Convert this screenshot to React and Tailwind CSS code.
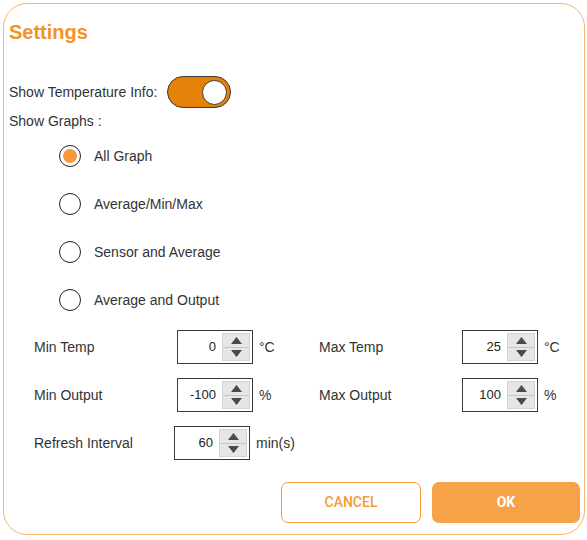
import React, { useState } from 'react';

const NumberBox = ({ value }) => (
  <div className="flex h-[34px] w-[76px] items-stretch border border-[#3a3a3a] bg-white">
    <div className="flex flex-1 items-center justify-end pr-[6px] text-[13px] text-[#222]">{value}</div>
    <div className="my-[2px] mr-[2px] flex w-[28px] flex-col border border-[#d4d4d4] bg-[#e6e6e6]">
      <div className="flex flex-1 items-center justify-center border-b border-[#c4c4c4]">
        <svg width="11" height="7" viewBox="0 0 11 7"><path d="M5.5 0L11 7H0z" fill="#4a4a4a" /></svg>
      </div>
      <div className="flex flex-1 items-center justify-center">
        <svg width="11" height="7" viewBox="0 0 11 7"><path d="M0 0h11L5.5 7z" fill="#4a4a4a" /></svg>
      </div>
    </div>
  </div>
);

const Field = ({ label, value, unit, labelW = 'w-[143px]' }) => (
  <div className="flex items-center">
    <span className={`${labelW} text-[14px] text-[#333]`}>{label}</span>
    <NumberBox value={value} />
    <span className="ml-[6px] text-[14px] text-[#333]">{unit}</span>
  </div>
);

const Radio = ({ label, checked, onClick }) => (
  <button onClick={onClick} className="flex h-[48px] items-center gap-[13px] text-left">
    <span className="flex h-[22px] w-[22px] items-center justify-center rounded-full border-[1.5px] border-[#222] bg-white">
      {checked && <span className="h-[14px] w-[14px] rounded-full bg-[#f49a3c]" />}
    </span>
    <span className="text-[14px] text-[#333]">{label}</span>
  </button>
);

export default function App() {
  const [showTemp, setShowTemp] = useState(true);
  const [graph, setGraph] = useState('all');
  const graphs = [
    { id: 'all', label: 'All Graph' },
    { id: 'avg', label: 'Average/Min/Max' },
    { id: 'sensor', label: 'Sensor and Average' },
    { id: 'output', label: 'Average and Output' },
  ];

  return (
    <div className="pl-[3px] pt-[3px]" style={{ fontFamily: '"Liberation Sans", Arial, sans-serif' }}>
      <div className="h-[532px] w-[582px] rounded-[24px] border-[1.5px] border-[#f9b56e] bg-white">
        {/* Header */}
        <h1 className="pl-[5px] pt-[14px] text-[20px] font-bold leading-[28px] text-[#f39325]">Settings</h1>

        {/* Toggles */}
        <div className="mt-[30px] flex items-center pl-[5px]">
          <span className="text-[14px] text-[#333]">Show Temperature Info:</span>
          <button
            onClick={() => setShowTemp(!showTemp)}
            className={`ml-[10px] flex h-[32px] w-[64px] items-center rounded-full border border-[#3a3a3a] px-[3px] ${
              showTemp ? 'justify-end bg-[#e58008]' : 'justify-start bg-[#bdbdbd]'
            }`}
          >
            <span className="h-[25px] w-[25px] rounded-full border border-[#3a3a3a] bg-white" />
          </button>
        </div>
        <div className="mt-[1px] pl-[5px] text-[14px] leading-[24px] text-[#333]">Show Graphs :</div>

        {/* Graph options */}
        <div className="mt-[-1px] flex flex-col items-start pl-[55px]">
          {graphs.map(g => (
            <Radio key={g.id} label={g.label} checked={graph === g.id} onClick={() => setGraph(g.id)} />
          ))}
        </div>

        {/* Numeric fields */}
        <div className="mt-[6px] grid grid-cols-[285px_285px] gap-y-[14px] pl-[30px]">
          <Field label="Min Temp" value="0" unit="°C" />
          <Field label="Max Temp" value="25" unit="°C" />
          <Field label="Min Output" value="-100" unit="%" />
          <Field label="Max Output" value="100" unit="%" />
          <Field label="Refresh Interval" value="60" unit="min(s)" labelW="w-[140px]" />
        </div>

        {/* Actions */}
        <div className="mt-[22px] flex justify-end gap-[11px] pr-[4px]" style={{ fontFamily: 'Roboto, "Liberation Sans", sans-serif' }}>
          <button className="h-[41px] w-[140px] rounded-[7px] border border-[#f49a3c] bg-white text-[14px] font-medium text-[#f49a3c]">
            CANCEL
          </button>
          <button className="h-[41px] w-[148px] rounded-[7px] bg-[#f6a248] text-[14px] font-bold text-white">
            OK
          </button>
        </div>
      </div>
    </div>
  );
}
